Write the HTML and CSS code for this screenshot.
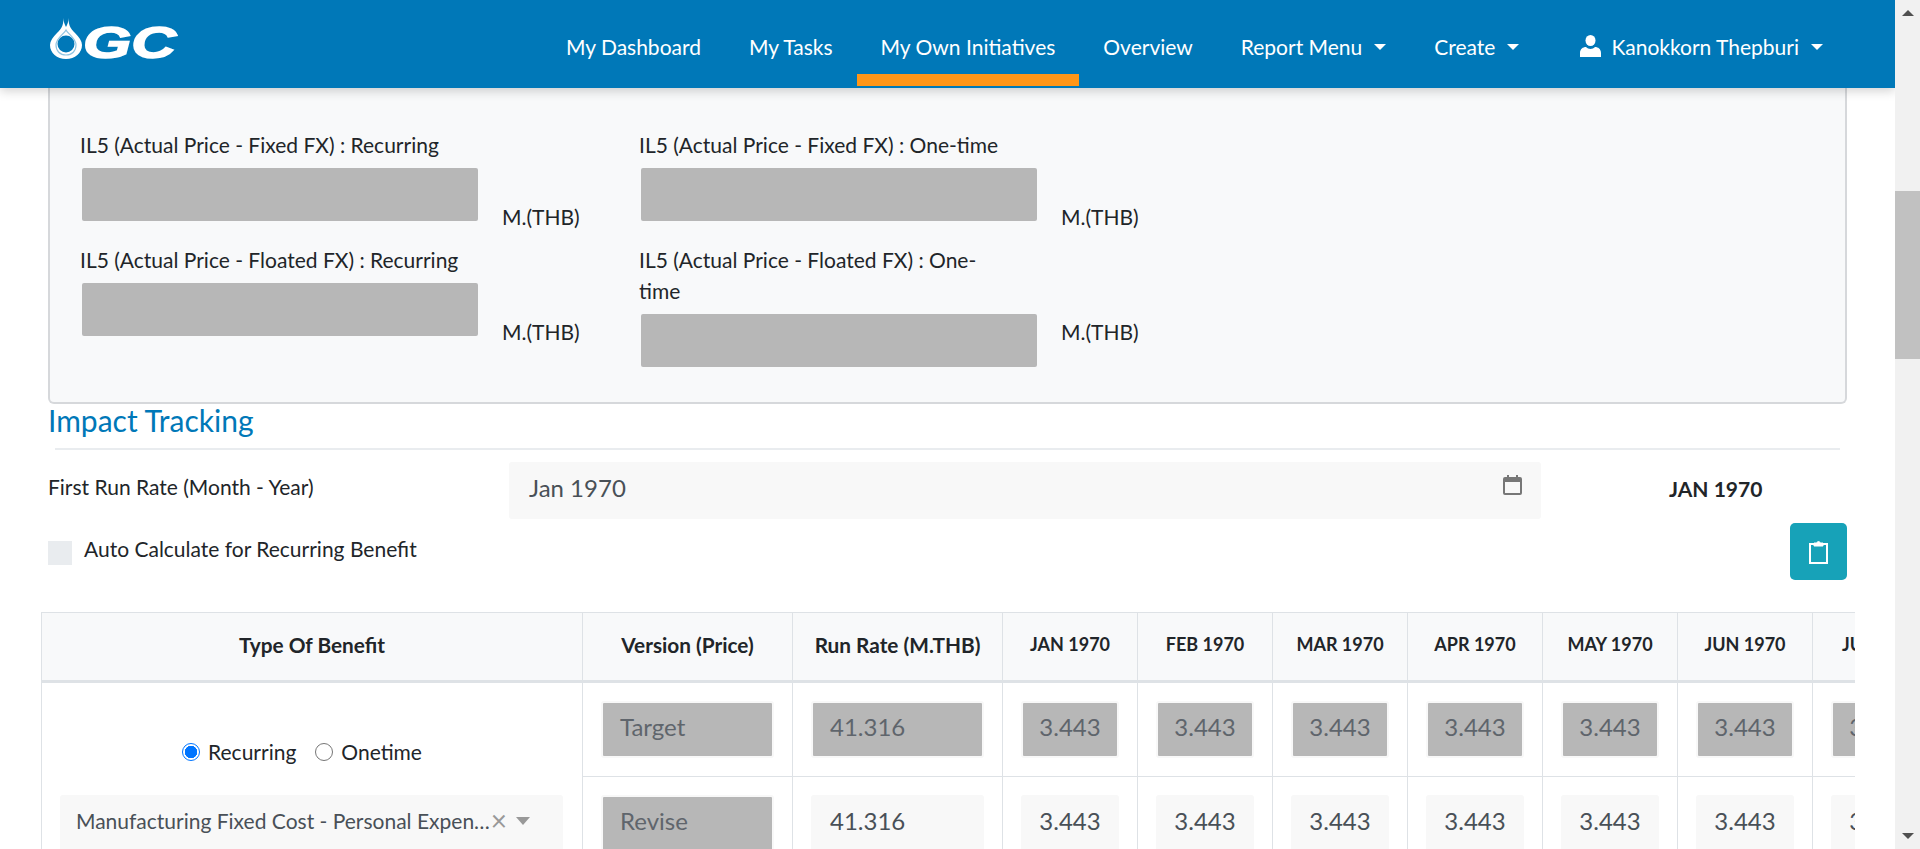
FILE: index.html
```html
<!DOCTYPE html>
<html lang="en">
<head>
    <meta charset="UTF-8">
    <title>My Own Initiatives</title>
    <link rel="stylesheet" href="styles.css">
</head>
<body>
    <div class="page">
        <div class="topbar">
            <div class="logo">
                <svg width="32" height="41" viewBox="0 0 32 41">
                    <path fill="#fff" d="M13 0c1 6-1 10-6 15C3 19 0 23 0 27c0 8 7 14 16 14s16-6 16-14c0-4-3-8-7-12C20 10 18 6 19 0c-1 5-2 7-3 9C15 7 14 5 13 0z"/>
                    <path fill="none" stroke="#8fc4e2" stroke-width="1.2" d="M16 12c-2 4-10 8-10 15 0 6 4 10 10 10s10-4 10-10c0-7-8-11-10-15z"/>
                    <circle cx="16" cy="26" r="8.500" fill="#0078b8"/>
                </svg>
                <span class="logo-text">GC</span>
            </div>
            <nav class="nav">
                <a class="nav-link" href="#">My Dashboard</a>
                <a class="nav-link" href="#">My Tasks</a>
                <a class="nav-link active" href="#">My Own Initiatives</a>
                <a class="nav-link" href="#">Overview</a>
                <a class="nav-link caret" href="#">Report Menu</a>
                <a class="nav-link caret" href="#">Create</a>
                <a class="nav-link caret user" href="#">
                    <svg width="21" height="22" viewBox="0 0 21 22"><ellipse cx="10.500" cy="5.500" rx="5" ry="5.500"/><path d="M0 22v-4c0-4 3-6 6-6 1 1 3 2 4.500 2s3.500-1 4.500-2c3 0 6 2 6 6v4z"/></svg>
                    Kanokkorn Thepburi
                </a>
            </nav>
        </div>

        <div class="content">
            <div class="il-card">
                <div class="il-row">
                    <div class="il-field">
                        <label>IL5 (Actual Price - Fixed FX) : Recurring</label>
                        <div class="box-grey"></div>
                    </div>
                    <span class="il-unit">M.(THB)</span>
                    <div class="il-field">
                        <label>IL5 (Actual Price - Fixed FX) : One-time</label>
                        <div class="box-grey"></div>
                    </div>
                    <span class="il-unit">M.(THB)</span>
                </div>
                <div class="il-row">
                    <div class="il-field">
                        <label>IL5 (Actual Price - Floated FX) : Recurring</label>
                        <div class="box-grey"></div>
                    </div>
                    <span class="il-unit">M.(THB)</span>
                    <div class="il-field">
                        <label>IL5 (Actual Price - Floated FX) : One-<br>time</label>
                        <div class="box-grey"></div>
                    </div>
                    <span class="il-unit">M.(THB)</span>
                </div>
            </div>

            <h4 class="section-title">Impact Tracking</h4>

            <div class="run-rate">
                <label>First Run Rate (Month - Year)</label>
                <div class="date-input">
                    Jan 1970
                    <svg width="19" height="20" viewBox="0 0 19 20" fill="none" stroke="#777"><rect x="1" y="3" width="17" height="16" rx="1" stroke-width="2"/><path d="M1 5h17" stroke-width="4"/><path d="M5 0v3M14 0v3" stroke-width="2"/></svg>
                </div>
                <strong class="run-rate-value">JAN 1970</strong>
            </div>

            <div class="auto-row">
                <label class="auto-check"><span class="check-box"></span>Auto Calculate for Recurring Benefit</label>
                <button class="btn-info">
                    <svg width="19" height="24" viewBox="0 0 19 24" fill="none" stroke="#fff" stroke-width="2"><path d="M5 4H1v19h17V4h-4"/><path d="M5 6V3h3a1.500 1.500 0 0 1 3 0h3v3z" fill="#fff" stroke-width="1"/></svg>
                </button>
            </div>

            <div class="table-wrap">
                <table class="impact">
                    <colgroup>
                        <col class="c-type"><col class="c-wide"><col class="c-wide">
                        <col class="c-month"><col class="c-month"><col class="c-month"><col class="c-month"><col class="c-month"><col class="c-month"><col class="c-month">
                    </colgroup>
                    <thead>
                        <tr>
                            <th class="big">Type Of Benefit</th>
                            <th class="big">Version (Price)</th>
                            <th class="big">Run Rate (M.THB)</th>
                            <th>JAN 1970</th><th>FEB 1970</th><th>MAR 1970</th><th>APR 1970</th><th>MAY 1970</th><th>JUN 1970</th><th>JUL 1970</th>
                        </tr>
                    </thead>
                    <tbody>
                        <tr>
                            <td rowspan="2" class="type-cell">
                                <div class="radios">
                                    <span class="radio on"></span>Recurring
                                    <span class="radio"></span>Onetime
                                </div>
                                <div class="select-box">
                                    <span class="select-text">Manufacturing Fixed Cost - Personal Expense</span>
                                    <span class="select-x">×</span>
                                    <span class="select-arrow"></span>
                                </div>
                            </td>
                            <td><div class="cell-input grey left">Target</div></td>
                            <td><div class="cell-input grey left">41.316</div></td>
                            <td><div class="cell-input grey">3.443</div></td>
                            <td><div class="cell-input grey">3.443</div></td>
                            <td><div class="cell-input grey">3.443</div></td>
                            <td><div class="cell-input grey">3.443</div></td>
                            <td><div class="cell-input grey">3.443</div></td>
                            <td><div class="cell-input grey">3.443</div></td>
                            <td><div class="cell-input grey">3.443</div></td>
                        </tr>
                        <tr>
                            <td><div class="cell-input grey left">Revise</div></td>
                            <td><div class="cell-input left">41.316</div></td>
                            <td><div class="cell-input">3.443</div></td>
                            <td><div class="cell-input">3.443</div></td>
                            <td><div class="cell-input">3.443</div></td>
                            <td><div class="cell-input">3.443</div></td>
                            <td><div class="cell-input">3.443</div></td>
                            <td><div class="cell-input">3.443</div></td>
                            <td><div class="cell-input">3.443</div></td>
                        </tr>
                    </tbody>
                </table>
            </div>
        </div>
    </div>

    <div class="scrollbar">
        <span class="scroll-up"></span>
        <div class="scroll-thumb"></div>
        <span class="scroll-down"></span>
    </div>
</body>
</html>
```

FILE: styles.css
```css
html, body {
    height: 100%;
}

body {
    font-family: Lato, "Open Sans", sans-serif;
    font-size: 21px;
    line-height: 31.5px;
    color: #212529;
    background-color: #fff;
    margin: 0;
    display: flex;
    overflow: hidden;
}

.page {
    flex: 1;
    min-width: 0;
    height: 849px;
    overflow: hidden;
}

/* top bar */
.topbar {
    position: relative;
    z-index: 2;
    height: 88px;
    background-color: #0078b8;
    display: flex;
    box-shadow: 0 3px 10px rgba(0, 0, 0, 0.18);
}

.logo {
    display: flex;
    align-items: flex-end;
    height: 41px;
    margin: 18px 0 0 50px;
    gap: 1px;
}

.logo-text {
    width: 91px;
    color: #fff;
    font-family: "Liberation Sans", sans-serif;
    font-size: 45px;
    font-weight: bold;
    font-style: italic;
    line-height: 32px;
    -webkit-text-stroke: 1.5px #fff;
    transform: scaleX(1.38);
    transform-origin: left;
}

.nav {
    display: flex;
    margin-left: auto;
    padding-right: 48px;
}

.nav-link {
    color: #fff;
    text-decoration: none;
    height: 86px;
    padding: 32px 24px 0;
    line-height: 30px;
    display: flex;
    align-items: flex-start;
    box-sizing: border-box;
    border-bottom: 12px solid transparent;
    white-space: nowrap;
}

.nav-link.active {
    border-bottom-color: #ff9618;
}

.nav-link.caret::after {
    content: "";
    margin: 12px 0 0 12px;
    border-left: 6px solid transparent;
    border-right: 6px solid transparent;
    border-top: 6px solid #fff;
}

.nav-link.user {
    margin-left: 13px;
}

.nav-link.user svg {
    fill: #fff;
    margin: 3px 10px 0 0;
}

/* content */
.content {
    padding: 0 48px 0 48px;
}

.il-card {
    height: 316px;
    box-sizing: border-box;
    background-color: #f8f9fa;
    border: 2px solid #d6d8db;
    border-top: 0;
    border-radius: 0 0 6px 6px;
    padding: 41px 0 0 30px;
}

.il-row {
    display: flex;
    align-items: flex-start;
    margin-bottom: 11px;
}

.il-field {
    width: 422px;
}

.il-field label {
    display: block;
    margin-bottom: 7.500px;
}

.box-grey {
    width: 396px;
    height: 53px;
    margin-left: 2px;
    background-color: #b7b7b7;
    border-radius: 2px;
}

.il-unit {
    width: 137px;
    margin-top: 72px;
}

.section-title {
    color: #0078b8;
    font-size: 30px;
    font-weight: 400;
    line-height: 36px;
    margin: -2px 0 0;
}

.run-rate {
    border-top: 2px solid #e9ecef;
    margin: 10px 7px 0 7px;
    padding-top: 12px;
    display: flex;
}

.run-rate label {
    width: 461px;
    margin-left: -7px;
    padding-top: 9px;
}

.date-input {
    width: 1032px;
    height: 57px;
    box-sizing: border-box;
    background-color: #f8f8f8;
    border-radius: 3px;
    padding: 0 19px 6px 20px;
    font-size: 24px;
    color: #495057;
    display: flex;
    align-items: center;
    justify-content: space-between;
}

.date-input svg {
    margin-bottom: 6px;
}

.run-rate-value {
    margin-left: 128px;
    line-height: 53px;
}

.auto-row {
    display: flex;
    justify-content: space-between;
    margin-top: 4px;
}

.auto-check {
    display: flex;
    align-items: flex-start;
    padding-top: 10px;
}

.check-box {
    width: 24px;
    height: 24px;
    background-color: #e9ecef;
    margin: 8px 12px 0 0;
}

.btn-info {
    width: 57px;
    height: 57px;
    background-color: #17a2b8;
    border: 0;
    border-radius: 5px;
    display: flex;
    align-items: center;
    justify-content: center;
    padding: 0;
}

/* table */
.table-wrap {
    margin: 32px -8px 0 -7px;
    overflow: hidden;
}

.impact {
    border-collapse: collapse;
    table-layout: fixed;
    width: 1906px;
}

.c-type { width: 541px; }
.c-wide { width: 210px; }
.c-month { width: 135px; }

.impact th {
    height: 63px;
    padding: 0 0 4px;
    background-color: #f8f9fa;
    border: 1px solid #dee2e6;
    border-bottom: 3px solid #dee2e6;
    font-size: 20.800px;
    font-weight: 700;
    text-align: center;
}

.impact th:not(.big) {
    font-size: 18px;
}

.impact td {
    height: 93px;
    padding: 0;
    border: 1px solid #dee2e6;
    text-align: center;
}

.impact .type-cell {
    vertical-align: top;
}

.radios {
    margin-top: 53px;
    padding-right: 20px;
    display: flex;
    justify-content: center;
    align-items: center;
}

.radio {
    width: 18px;
    height: 18px;
    border: 1px solid #767676;
    border-radius: 50%;
    margin: 0 8px 0 19px;
    box-sizing: border-box;
}

.radio.on {
    margin-left: 0;
    border: 1px solid #0075ff;
    background: radial-gradient(circle, #0075ff 0 6px, #fff 6.500px);
}

.select-box {
    display: flex;
    align-items: center;
    box-sizing: border-box;
    margin: 27px 19px 0 18px;
    padding: 0 33px 8px 16px;
    height: 60px;
    background-color: #f8f8f8;
    border-radius: 3px;
    color: #495057;
}

.select-text {
    flex: 1;
    min-width: 0;
    overflow: hidden;
    white-space: nowrap;
    text-overflow: ellipsis;
    text-align: left;
}

.select-x {
    color: #999;
    font-size: 28px;
    margin: 0 9px 0 -1px;
}

.select-arrow {
    border-left: 7px solid transparent;
    border-right: 7px solid transparent;
    border-top: 8px solid #999;
}

.cell-input {
    margin: 0 auto;
    box-sizing: border-box;
    width: 98px;
    height: 57px;
    line-height: 48px;
    background-color: #f8f8f8;
    border: 2px solid #f8f8f8;
    border-radius: 3px;
    font-size: 24px;
    color: #495057;
}

.cell-input.grey {
    background-color: #b7b7b7;
    color: #5f656c;
}

.cell-input.left {
    width: 173px;
    text-align: left;
    padding-left: 17px;
}

/* scrollbar */
.scrollbar {
    flex: none;
    width: 25px;
    height: 849px;
    background-color: #f1f1f1;
    display: flex;
    flex-direction: column;
    align-items: center;
}

.scroll-up {
    margin-top: 10px;
    border-left: 6px solid transparent;
    border-right: 6px solid transparent;
    border-bottom: 6px solid #505050;
}

.scroll-thumb {
    align-self: stretch;
    margin-top: 175px;
    height: 168px;
    background-color: #c1c1c1;
}

.scroll-down {
    margin-top: auto;
    margin-bottom: 10px;
    border-left: 6px solid transparent;
    border-right: 6px solid transparent;
    border-top: 6px solid #505050;
}
```
